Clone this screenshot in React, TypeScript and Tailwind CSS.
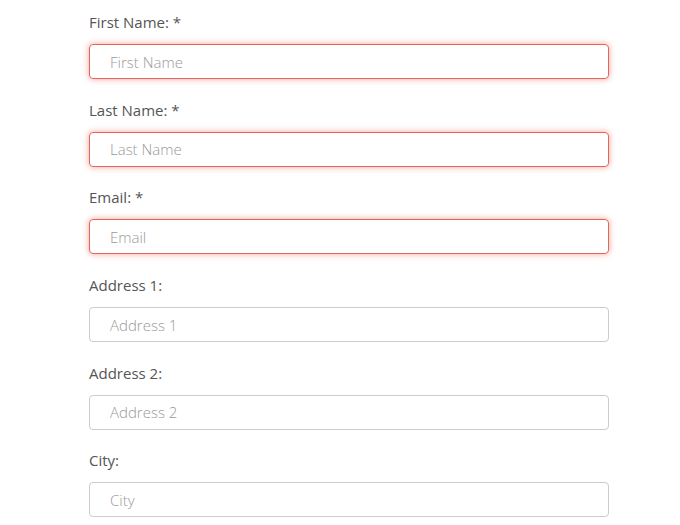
const fields = [
	{ label: "First Name: *", placeholder: "First Name", error: true },
	{ label: "Last Name: *", placeholder: "Last Name", error: true },
	{ label: "Email: *", placeholder: "Email", error: true },
	{ label: "Address 1:", placeholder: "Address 1", error: false },
	{ label: "Address 2:", placeholder: "Address 2", error: false },
	{ label: "City:", placeholder: "City", error: false },
];

export default function App() {
	return (
		<main className="min-h-screen bg-white font-['Open_Sans',sans-serif] text-[#333]">
			<form className="flex w-[609px] flex-col gap-[20.7px] pt-3 pl-[89px]">
				{fields.map((f) => (
					<div key={f.placeholder} className="flex flex-col gap-[11px]">
						<label className="text-[15px] leading-[21px] text-[#555]">
							{f.label}
						</label>
						<input
							type="text"
							placeholder={f.placeholder}
							className={
								f.error
									? "h-[35px] w-full rounded-[4px] border border-[#e3665a] px-5 text-[15px] shadow-[0_0_6px_rgba(233,80,70,0.55)] outline-none placeholder:font-light placeholder:text-[#999]"
									: "h-[35px] w-full rounded-[4px] border border-[#ccc] px-5 text-[15px] outline-none placeholder:font-light placeholder:text-[#999]"
							}
						/>
					</div>
				))}
			</form>
		</main>
	);
}
